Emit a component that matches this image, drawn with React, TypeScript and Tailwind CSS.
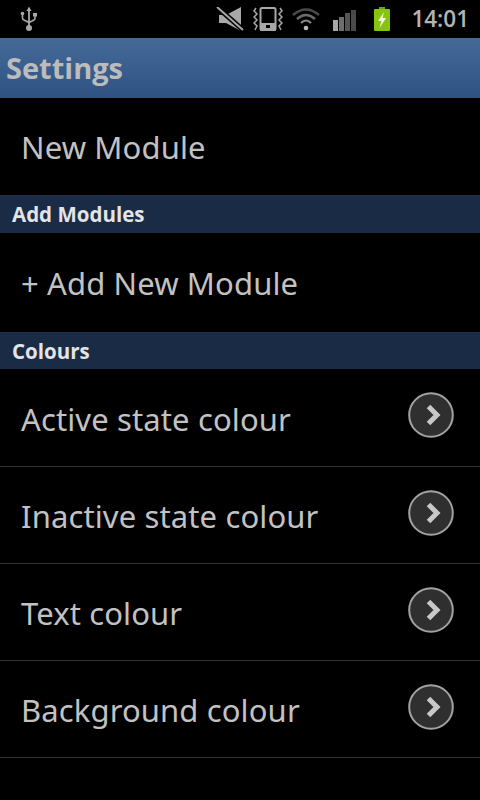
import React from "react";

function StatusBar() {
  return (
    <div className="h-[38px] bg-black flex items-center pl-[20px] pr-[11px] shrink-0">
      {/* usb */}
      <svg width="18" height="26" viewBox="0 0 18 26">
        <path d="M9 0.5 L11.5 5 H9.9 V20 H8.1 V5 H6.5 Z" fill="#a8a8a8" />
        <circle cx="9" cy="22" r="3" fill="#a8a8a8" />
        <path d="M2.5 8 V12 Q2.5 13.5 4 14 L9 16.5 L14 14 Q15 13.5 15 12 V10" stroke="#a8a8a8" strokeWidth="1.6" fill="none" />
        <circle cx="2.5" cy="7.5" r="1.8" fill="#a8a8a8" />
        <rect x="13" y="7" width="4" height="3.5" fill="#a8a8a8" />
      </svg>
      <div className="flex-1" />
      {/* mute */}
      <svg width="28" height="24" viewBox="0 0 28 24" className="mr-[9px]">
        <path d="M3 8 H10 L25 0 V24 L10 16 H3 Z" fill="#a8a8a8" />
        <path d="M1 0 L27 23" stroke="#000" strokeWidth="5" />
        <path d="M1 0 L27 23" stroke="#a8a8a8" strokeWidth="2" />
      </svg>
      {/* vibrate */}
      <svg width="30" height="24" viewBox="0 0 30 24" className="mr-[9px]">
        <rect x="7.5" y="1" width="15" height="22" rx="1.5" fill="none" stroke="#a8a8a8" strokeWidth="2" />
        <rect x="7" y="16" width="16" height="8" rx="1" fill="#a8a8a8" />
        <rect x="13" y="18" width="4" height="3" fill="#000" />
        <path d="M3 1 L1 4 L4 7 L1 10 L4 13 L1 16 L4 19 L2 23" fill="none" stroke="#a8a8a8" strokeWidth="1.5" />
        <path d="M27 1 L29 4 L26 7 L29 10 L26 13 L29 16 L26 19 L28 23" fill="none" stroke="#a8a8a8" strokeWidth="1.5" />
      </svg>
      {/* wifi */}
      <svg width="28" height="24" viewBox="0 0 28 24" className="mr-[13px]">
        <path d="M1 8 Q14 -3 27 8" fill="none" stroke="#4a4a4a" strokeWidth="2.4" />
        <path d="M5 12 Q14 4 23 12" fill="none" stroke="#6a6a6a" strokeWidth="2.4" />
        <path d="M9 16 Q14 11 19 16" fill="none" stroke="#8a8a8a" strokeWidth="2.2" />
        <circle cx="14" cy="21" r="2.3" fill="#b8b8b8" />
      </svg>
      {/* signal */}
      <div className="flex items-end gap-[1px] h-[21px] mr-[17px] mt-[2px]">
        <div className="w-[5px] h-[11px] bg-[#a8a8a8]" />
        <div className="w-[5px] h-[14px] bg-[#6e6e6e]" />
        <div className="w-[5px] h-[18px] bg-[#555555]" />
        <div className="w-[5px] h-[21px] bg-[#4a4a4a]" />
      </div>
      {/* battery */}
      <svg width="18" height="24" viewBox="0 0 18 24" className="mr-[20px]">
        <rect x="6" y="0" width="6" height="3" fill="#6da30c" />
        <rect x="1" y="2" width="16" height="22" rx="1" fill="#86c40e" />
        <path d="M11 5 L5 14 H8.5 L6.5 21 L13 11 H9.5 Z" fill="#f4f8e8" />
      </svg>
      <span className="font-['Open_Sans',sans-serif] font-semibold text-[22.5px] leading-none text-[#b4b4b4]">14:01</span>
    </div>
  );
}

function SectionHeader({ title, height = "h-[38px]" }: { title: string; height?: string }) {
  return (
    <div className={`${height} bg-[#1a2b45] border-t border-[#222f46] flex items-center px-[12px] shrink-0`}>
      <span className="font-['Open_Sans',sans-serif] font-bold text-[20.5px] text-[#e4e4e6] leading-none">{title}</span>
    </div>
  );
}

function Row({ label, arrow, divider, height = "h-[97px]" }: { label: string; arrow?: boolean; divider?: boolean; height?: string }) {
  return (
    <div className={`${height} flex items-center pl-[21px] pr-[26px] justify-between shrink-0 ${divider ? "border-b border-[#333333]" : ""}`}>
      <span className={`font-['Noto_Sans',sans-serif] text-[31px] tracking-[0.12px] leading-none text-[#c2c2c2] ${arrow ? "pt-[3px]" : "pt-[1px]"}`}>{label}</span>
      {arrow && (
        <svg width="46" height="46" viewBox="0 0 46 46" className="mb-[5px]">
          <circle cx="23" cy="23" r="21.8" fill="#2f2f2f" stroke="#a2a2a2" strokeWidth="2" />
          <path d="M20.5 14.5 L29 23 L20.5 31.5" fill="none" stroke="#c8c8c8" strokeWidth="5" />
        </svg>
      )}
    </div>
  );
}

export default function App() {
  return (
    <div className="w-[480px] h-[800px] bg-black overflow-hidden flex flex-col">
      <StatusBar />
      <div className="h-[60px] shrink-0 bg-gradient-to-b from-[#456a98] to-[#2f5282] flex items-center px-[6px] pb-[2px]">
        <span className="font-['Open_Sans',sans-serif] font-bold text-[29px] leading-none text-[#bcbcbc]">Settings</span>
      </div>
      <Row label="New Module" />
      <SectionHeader title="Add Modules" />
      <Row label="+ Add New Module" height="h-[99px]" />
      <SectionHeader title="Colours" height="h-[37px]" />
      <Row label="Active state colour" arrow divider height="h-[98px]" />
      <Row label="Inactive state colour" arrow divider />
      <Row label="Text colour" arrow divider />
      <Row label="Background colour" arrow divider />
    </div>
  );
}
